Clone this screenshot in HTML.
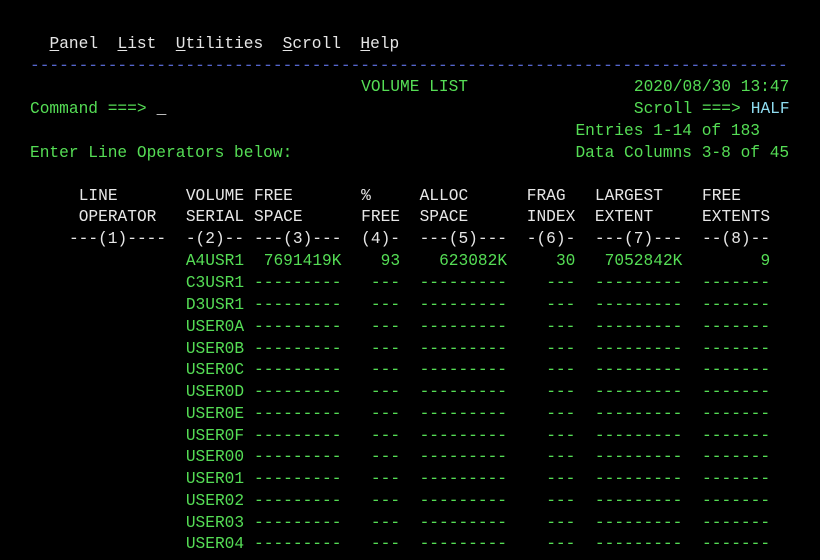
<!DOCTYPE html>
<html><head><meta charset="utf-8"><style>
html,body{margin:0;padding:0;background:#000;width:820px;height:560px;overflow:hidden}
.r{position:absolute;left:0;width:820px;height:22px;font-family:"Liberation Mono",monospace;font-size:16.2px;line-height:22px;color:#55dd55;white-space:pre}
.r span{position:absolute;left:calc(30px + var(--c)*9.74px)}
.w{color:#e6e6e6}.b{color:#5566cc}.cy{color:#8edcf0}
u{text-decoration:underline;text-underline-offset:2px}
</style></head><body>
<div class="r w" style="top:33px"><span style="--c:2"><u>P</u>anel  <u>L</u>ist  <u>U</u>tilities  <u>S</u>croll  <u>H</u>elp</span></div>
<div class="r b" style="top:55px"><span style="--c:0">------------------------------------------------------------------------------</span></div>
<div class="r" style="top:76px"><span style="--c:34">VOLUME LIST</span><span style="--c:62">2020/08/30 13:47</span></div>
<div class="r" style="top:98px"><span style="--c:0">Command ===></span><span class="w" style="--c:13">_</span><span style="--c:62">Scroll ===></span><span class="cy" style="--c:74">HALF</span></div>
<div class="r" style="top:120px"><span style="--c:56">Entries 1-14 of 183</span></div>
<div class="r" style="top:142px"><span style="--c:0">Enter Line Operators below:</span><span style="--c:56">Data Columns 3-8 of 45</span></div>
<div class="r w" style="top:185px"><span style="--c:5">LINE</span><span style="--c:16">VOLUME</span><span style="--c:23">FREE</span><span style="--c:34">%</span><span style="--c:40">ALLOC</span><span style="--c:51">FRAG</span><span style="--c:58">LARGEST</span><span style="--c:69">FREE</span></div>
<div class="r w" style="top:206px"><span style="--c:5">OPERATOR</span><span style="--c:16">SERIAL</span><span style="--c:23">SPACE</span><span style="--c:34">FREE</span><span style="--c:40">SPACE</span><span style="--c:51">INDEX</span><span style="--c:58">EXTENT</span><span style="--c:69">EXTENTS</span></div>
<div class="r w" style="top:228px"><span style="--c:4">---(1)----</span><span style="--c:16">-(2)--</span><span style="--c:23">---(3)---</span><span style="--c:34">(4)-</span><span style="--c:40">---(5)---</span><span style="--c:51">-(6)-</span><span style="--c:58">---(7)---</span><span style="--c:69">--(8)--</span></div>
<div class="r" style="top:250px"><span style="--c:16">A4USR1</span><span style="--c:24">7691419K</span><span style="--c:36">93</span><span style="--c:42">623082K</span><span style="--c:54">30</span><span style="--c:59">7052842K</span><span style="--c:75">9</span></div>
<div id="rows"></div>
<script>
var names=["C3USR1","D3USR1","USER0A","USER0B","USER0C","USER0D","USER0E","USER0F","USER00","USER01","USER02","USER03","USER04"];
var h="";
for(var i=0;i<names.length;i++){
 var t=33+(11+i)*21.75;
 h+='<div class="r" style="top:'+t+'px"><span style="--c:16">'+names[i]+'</span><span style="--c:23">---------</span><span style="--c:35">---</span><span style="--c:40">---------</span><span style="--c:53">---</span><span style="--c:58">---------</span><span style="--c:69">-------</span></div>';
}
document.getElementById("rows").innerHTML=h;
</script>
</body></html>
